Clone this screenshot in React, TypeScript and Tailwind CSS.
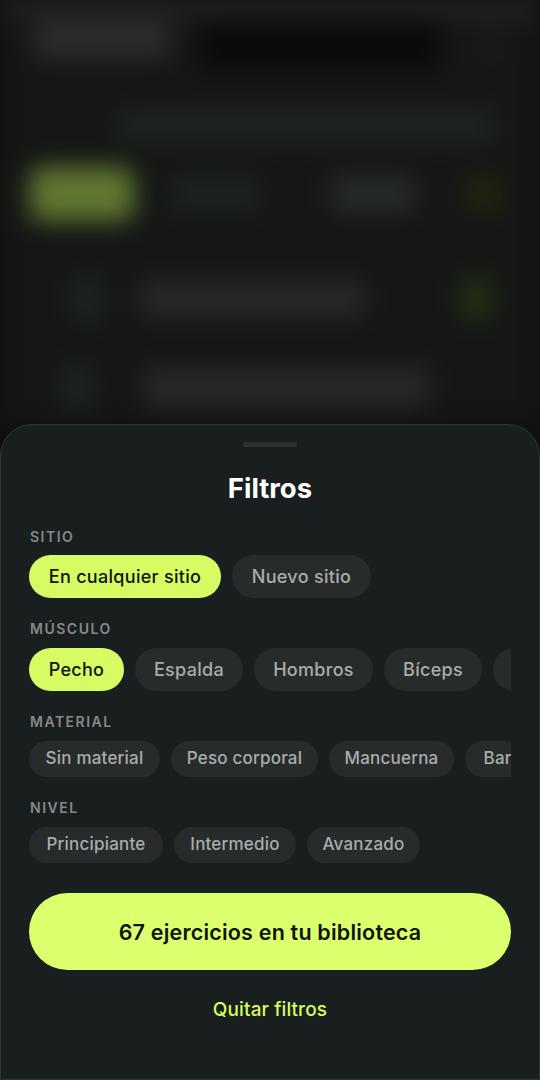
const font = { fontFamily: 'Inter, "Noto Sans", sans-serif' };

function BigChip({ label, width, active }: { label: string; width: string; active?: boolean }) {
  return (
    <div
      className={`flex h-[43px] shrink-0 items-center justify-center rounded-full text-lg font-medium tracking-[0.3px] ${width} ${
        active ? 'bg-[#d6fb63] text-[#10140f]' : 'bg-[#272c2b] text-[#a9adab]'
      }`}
    >
      {label}
    </div>
  );
}

function SmallChip({ label, width }: { label: string; width: string }) {
  return (
    <div
      className={`flex h-9 shrink-0 items-center justify-center rounded-full bg-[#272c2b] text-[17px] font-medium tracking-[0.2px] text-[#a9adab] ${width}`}
    >
      {label}
    </div>
  );
}

function Label({ text, className }: { text: string; className: string }) {
  return (
    <div className={`pl-px text-sm font-semibold leading-4 tracking-[1.5px] text-[#858a88] ${className}`}>
      {text}
    </div>
  );
}

// app de fondo, desenfocada detrás del panel
function BlurredApp() {
  return (
    <div className="h-[424px] overflow-hidden bg-[#141716] blur-[12px]">
      <div className="h-4 bg-[#242724]" />
      <div className="flex h-[74px] items-start pt-[6px]">
        <div className="ml-[34px] h-9 w-[136px] rounded bg-[#2c2e2d]" />
        <div className="ml-[30px] h-[46px] w-[240px] bg-[#090b0a]" />
        <div className="ml-[40px] h-[46px] w-5 bg-[#1a1c1b]" />
      </div>
      <div className="ml-[118px] mt-5 h-8 w-[378px] rounded bg-[#1f2423]" />
      <div className="mt-[25px] flex items-center">
        <div className="ml-[30px] h-[54px] w-[104px] rounded-xl bg-[#617731]" />
        <div className="ml-[35px] h-9 w-[90px] rounded bg-[#1d2221]" />
        <div className="ml-[72px] h-9 w-[84px] rounded bg-[#272b2a]" />
        <div className="ml-[48px] h-9 w-10 rounded bg-[#202410]" />
      </div>
      <div className="mt-[56px] flex items-center">
        <div className="ml-[72px] h-11 w-[30px] rounded bg-[#1f2524]" />
        <div className="ml-[38px] h-9 w-[225px] rounded bg-[#282a29]" />
        <div className="ml-[95px] h-10 w-8 rounded bg-[#263014]" />
      </div>
      <div className="mt-[44px] flex items-center">
        <div className="ml-[62px] h-11 w-[30px] rounded bg-[#1f2524]" />
        <div className="ml-[52px] h-10 w-[285px] rounded bg-[#272928]" />
      </div>
    </div>
  );
}

export default function App() {
  return (
    <div className="relative h-[1080px] w-[540px] overflow-hidden bg-[#0e1110]" style={font}>
      <BlurredApp />

      <div className="absolute inset-x-0 bottom-0 top-[424px] rounded-t-[32px] border border-[#2f3534] bg-[#191e1f] px-[28px]">
        <div className="mx-auto mt-[17px] h-[5px] w-[54px] rounded-full bg-[#2c3231]" />
        <h1 className="mt-[23px] text-center text-[27.5px] font-bold leading-9 text-white">Filtros</h1>

        <Label text="SITIO" className="mt-[23px]" />
        <div className="mt-[10px] flex gap-[11px]">
          <BigChip label="En cualquier sitio" width="w-[192px]" active />
          <BigChip label="Nuevo sitio" width="w-[139px]" />
        </div>

        <Label text="MÚSCULO" className="mt-[23px]" />
        <div className="mt-[11px] flex gap-[11px] overflow-hidden">
          <BigChip label="Pecho" width="w-[95px]" active />
          <BigChip label="Espalda" width="w-[108px]" />
          <BigChip label="Hombros" width="w-[119px]" />
          <BigChip label="Bíceps" width="w-[98px]" />
          <BigChip label="Tríceps" width="w-[110px]" />
        </div>

        <Label text="MATERIAL" className="mt-[23px]" />
        <div className="mt-[11px] flex gap-[11px] overflow-hidden">
          <SmallChip label="Sin material" width="w-[131px]" />
          <SmallChip label="Peso corporal" width="w-[147px]" />
          <SmallChip label="Mancuerna" width="w-[125px]" />
          <SmallChip label="Barra" width="w-[82px]" />
        </div>

        <Label text="NIVEL" className="mt-[23px]" />
        <div className="mt-[11px] flex gap-[11px]">
          <SmallChip label="Principiante" width="w-[134px]" />
          <SmallChip label="Intermedio" width="w-[122px]" />
          <SmallChip label="Avanzado" width="w-[113px]" />
        </div>

        <button className="mt-[30px] flex h-[77px] w-full items-center justify-center rounded-full bg-[#dcff6e] pt-0.5 text-[21.5px] font-semibold tracking-[0.2px] text-[#10140f]">
          67 ejercicios en tu biblioteca
        </button>
        <div className="mt-[28px] text-center text-[19px] font-medium leading-6 tracking-[0.1px] text-[#d6fb63]">Quitar filtros</div>
      </div>
    </div>
  );
}
